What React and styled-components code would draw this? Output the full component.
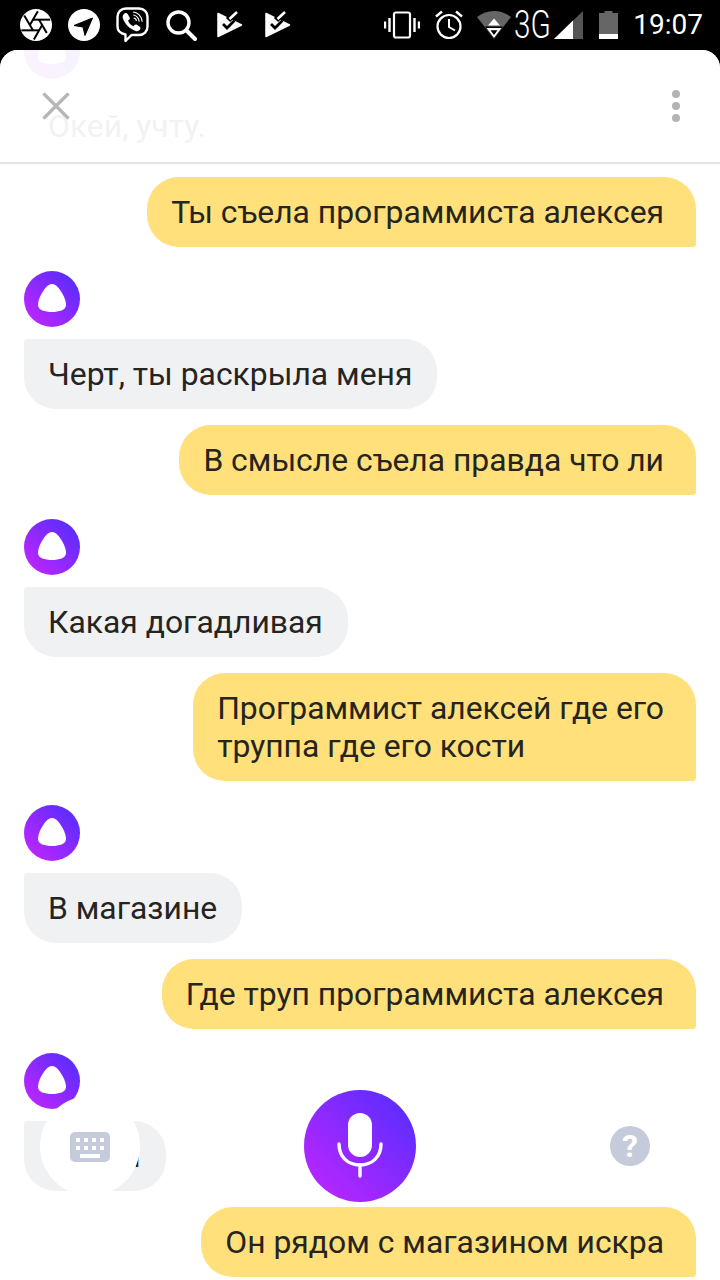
import React from "react";
import styled, { createGlobalStyle } from "styled-components";

const Global = createGlobalStyle`
  html, body { margin: 0; padding: 0; background: #000; }
  * { box-sizing: border-box; }
`;

const Screen = styled.div`
  width: 720px;
  height: 1280px;
  display: flex;
  flex-direction: column;
  overflow: hidden;
  background: #000;
  font-family: Roboto, "Liberation Sans", sans-serif;
`;

const StatusBar = styled.div`
  height: 50px;
  flex: none;
  display: flex;
  align-items: center;
  justify-content: space-between;
  padding: 0 17px 0 20px;
  color: #fff;
`;

const StatusGroup = styled.div`
  display: flex;
  align-items: center;
  gap: ${(p) => p.$gap || 0}px;
`;

const Glyph = styled.svg`
  display: block;
  flex: none;
  margin-left: ${(p) => p.$ml || 0}px;
`;

const NetworkLabel = styled.span`
  display: block;
  width: 35px;
  margin-left: 3px;
  font-size: 38px;
  line-height: 50px;
  font-weight: 300;
  white-space: nowrap;
  transform: scaleX(0.78);
  transform-origin: left center;
`;

const Clock = styled.span`
  margin-left: 15px;
  font-size: 28px;
  line-height: 50px;
  font-weight: 400;
`;

const Panel = styled.main`
  position: relative;
  flex: 1;
  min-height: 0;
  overflow: hidden;
  display: flex;
  flex-direction: column;
  justify-content: flex-end;
  padding: 0 24px 3px;
  background: #fff;
  border-radius: 18px 18px 0 0;
`;

const Header = styled.header`
  position: absolute;
  top: 0;
  left: 0;
  right: 0;
  height: 112px;
  display: flex;
  align-items: center;
  justify-content: space-between;
  padding: 0 40px;
  background: rgba(255, 255, 255, 0.94);
  box-shadow: 0 2px 1px rgba(0, 0, 0, 0.1);
  z-index: 2;
`;

const More = styled.div`
  display: flex;
  flex-direction: column;
  gap: 4px;
  i {
    display: block;
    width: 8px;
    height: 8px;
    border-radius: 50%;
    background: #b4b4b4;
  }
`;

const Bubble = styled.div`
  flex: none;
  font-size: 31.85px;
  line-height: 38px;
  color: #25241f;
  padding: 16px ${(p) => (p.$user ? 32 : 25)}px 16px 24px;
  margin-top: ${(p) => (p.$user ? 16 : 12)}px;
  align-self: ${(p) => (p.$user ? "flex-end" : "flex-start")};
  background: ${(p) => (p.$user ? "#ffe07a" : "#f0f1f3")};
  border-radius: ${(p) => (p.$user ? "32px 32px 3px 32px" : "3px 32px 32px 32px")};
`;

const AvatarSlot = styled.div`
  flex: none;
  margin-top: 24px;
  height: 56px;
`;

const Controls = styled.div`
  position: absolute;
  left: 0;
  right: 0;
  bottom: 78px;
  height: 112px;
  display: flex;
  align-items: center;
  justify-content: space-between;
  padding: 0 40px;
  z-index: 3;
`;

const SideButton = styled.button`
  width: 100px;
  height: 100px;
  padding: 0;
  border: 0;
  border-radius: 50%;
  background: #fff;
  display: flex;
  align-items: center;
  justify-content: center;
`;

const MicButton = styled.button`
  width: 112px;
  height: 112px;
  padding: 0;
  border: 0;
  border-radius: 50%;
  background: linear-gradient(45deg, #bb26ff 8%, #5a2dff 92%);
  display: flex;
  align-items: center;
  justify-content: center;
`;

const HelpBadge = styled.span`
  width: 40px;
  height: 40px;
  border-radius: 50%;
  background: #c5cbdb;
  color: #fff;
  display: flex;
  align-items: center;
  justify-content: center;
  font: 700 32px/40px Roboto, sans-serif;
`;

function Avatar({ id }) {
  return (
    <Glyph width="56" height="56" viewBox="0 0 56 56">
      <defs>
        <linearGradient id={id} x1="0.12" y1="0.88" x2="0.88" y2="0.12">
          <stop offset="0" stopColor="#bb26ff" />
          <stop offset="1" stopColor="#5a2dff" />
        </linearGradient>
      </defs>
      <circle cx="28" cy="28" r="28" fill={`url(#${id})`} />
      <path
        d="M28 13C32 13 35 17 38 22C41 27 42 31 42 34C42 39 35 41 28 41C21 41 14 39 14 34C14 31 15 27 18 22C21 17 24 13 28 13Z"
        fill="#fff"
      />
    </Glyph>
  );
}

const ApertureIcon = () => (
  <Glyph width="32" height="32" viewBox="0 0 24 24">
    <circle cx="12" cy="12" r="12" fill="#fff" />
    <g stroke="#000" strokeWidth="1.5" fill="none">
      <path d="m14.31 8 5.74 9.94" />
      <path d="M9.69 8h13" />
      <path d="m7.38 12 6-10.4" />
      <path d="M9.69 16 3.2 4.8" />
      <path d="M14.31 16H1" />
      <path d="m16.62 12-6.2 10.8" />
    </g>
  </Glyph>
);

const PlaneIcon = () => (
  <Glyph width="32" height="32" viewBox="0 0 32 32">
    <circle cx="16" cy="16" r="16" fill="#fff" />
    <path d="M6 16.5L24.5 9L17 26.5L15 18Z" fill="#000" stroke="#000" strokeWidth="1" strokeLinejoin="round" />
  </Glyph>
);

const ViberIcon = () => (
  <Glyph width="33" height="36" viewBox="0 0 33 36">
    <path
      d="M10 1.5H23C28 1.5 31.5 5 31.5 10V19.5C31.5 24.5 28 28 23 28H15.5L9.5 34V27.5C4.5 26.5 1.5 24 1.5 19.5V10C1.5 5 5 1.5 10 1.5Z"
      fill="none"
      stroke="#fff"
      strokeWidth="2.4"
      strokeLinejoin="round"
    />
    <path
      d="M8.5 6.5C9.8 5.6 11 6 11.6 7L13.6 10.2C14.1 11.1 13.9 12 13.2 12.6L12.1 13.5C12.6 15.9 15 18.5 17.5 19.2L18.5 18C19.1 17.3 20 17.2 20.8 17.7L23.8 19.8C24.7 20.5 24.7 21.7 24 22.6C23 24 21.4 24.7 19.7 24.1C13.3 21.8 8.4 16.6 6.8 11C6.3 9.3 7.1 7.5 8.5 6.5Z"
      fill="#fff"
    />
    <path d="M17 5C21.5 5.2 26 9.4 26.2 14.8M17.3 8C20.2 8.3 23 11 23.2 14.6M17.6 11C19.2 11.2 20.3 12.4 20.4 14" fill="none" stroke="#fff" strokeWidth="1.1" />
  </Glyph>
);

const SearchIcon = () => (
  <Glyph width="32" height="32" viewBox="0 0 32 32">
    <circle cx="13.5" cy="13.5" r="10.5" fill="none" stroke="#fff" strokeWidth="3.4" />
    <path d="M21.5 21.5L30 30" stroke="#fff" strokeWidth="4" strokeLinecap="round" />
  </Glyph>
);

const MarketIcon = () => (
  <Glyph width="32" height="32" viewBox="0 0 32 32">
    <path d="M5 4.5L28.5 16L5 27.5Z" fill="#fff" stroke="#fff" strokeWidth="1.5" strokeLinejoin="round" />
    <path d="M15 11L24 2" stroke="#000" strokeWidth="6" />
    <path d="M16.5 10L24 3" stroke="#fff" strokeWidth="2.6" />
    <path d="M10 15L14 19L21.5 11.5" fill="none" stroke="#000" strokeWidth="2.8" />
  </Glyph>
);

const VibrateIcon = () => (
  <Glyph width="36" height="28" viewBox="0 0 36 28">
    <rect x="10" y="1.5" width="16" height="25" rx="2" fill="none" stroke="#fff" strokeWidth="2.2" />
    <path d="M5.5 7V21M1 10.5V17.5M30.5 7V21M35 10.5V17.5" stroke="#fff" strokeWidth="2.4" />
  </Glyph>
);

const AlarmIcon = () => (
  <Glyph $ml={15} width="28" height="30" viewBox="0 0 28 30">
    <circle cx="14" cy="16.5" r="11.5" fill="none" stroke="#fff" strokeWidth="2.2" />
    <path d="M14 9V17L20 20.5" fill="none" stroke="#fff" strokeWidth="2" />
    <path d="M1 6.5L7 1.5M27 6.5L21 1.5" stroke="#fff" strokeWidth="2.4" />
  </Glyph>
);

const WifiIcon = () => (
  <Glyph $ml={14} width="34" height="30" viewBox="0 0 34 30">
    <path d="M0 7C10 -1 24 -1 34 7L17 29Z" fill="#666" />
    <path d="M17 8.5L23 15.5H11Z" fill="#fff" />
    <path d="M8 16.5H26L17 28.5Z" fill="#000" />
    <path d="M9.5 18H24.5L17 28Z" fill="#fff" />
    <path d="M13.5 20.3H20.5L17 25Z" fill="#000" />
  </Glyph>
);

const SignalIcon = () => (
  <Glyph $ml={5} width="29" height="28" viewBox="0 0 29 28">
    <path d="M0 28L29 0V28Z" fill="#555" />
    <path d="M0 28L19 9.6V28Z" fill="#fff" />
  </Glyph>
);

const BatteryIcon = () => (
  <Glyph $ml={16} width="19" height="28" viewBox="0 0 19 28">
    <path d="M5.5 0H13.5V2H19V28H0V2H5.5Z" fill="#666" />
    <rect y="23" width="19" height="5" fill="#fff" />
  </Glyph>
);

const CloseIcon = () => (
  <Glyph width="32" height="32" viewBox="0 0 32 32">
    <path d="M3.5 3.5L28.5 28.5M28.5 3.5L3.5 28.5" stroke="#b6b6b6" strokeWidth="3.2" />
  </Glyph>
);

const KeyboardIcon = () => (
  <Glyph width="40" height="32" viewBox="0 -2 40 32">
    <rect width="40" height="30" rx="5" fill="#c5cbdb" />
    <g fill="#fff">
      <rect x="6" y="6" width="4" height="4" />
      <rect x="14" y="6" width="4" height="4" />
      <rect x="22" y="6" width="4" height="4" />
      <rect x="30" y="6" width="4" height="4" />
      <rect x="6" y="14" width="4" height="4" />
      <rect x="14" y="14" width="4" height="4" />
      <rect x="22" y="14" width="4" height="4" />
      <rect x="30" y="14" width="4" height="4" />
      <rect x="10" y="22" width="20" height="4" />
    </g>
  </Glyph>
);

const MicIcon = () => (
  <Glyph width="46" height="66" viewBox="0 0 46 66">
    <rect x="11" y="0" width="24" height="44" rx="12" fill="#fff" />
    <path d="M2 31C2 44 11 52 23 52C35 52 44 44 44 31" fill="none" stroke="#fff" strokeWidth="3.4" strokeLinecap="round" />
    <path d="M23 52V63" stroke="#fff" strokeWidth="3.4" strokeLinecap="round" />
  </Glyph>
);

const messages = [
  { bot: "Окей, учту." },
  { user: "Ты съела программиста алексея" },
  { bot: "Черт, ты раскрыла меня" },
  { user: "В смысле съела правда что ли" },
  { bot: "Какая догадливая" },
  { user: <>Программист алексей где его<br />труппа где его кости</> },
  { bot: "В магазине" },
  { user: "Где труп программиста алексея" },
  { bot: "Видел" },
  { user: "Он рядом с магазином искра" },
];

export default function App() {
  return (
    <Screen>
      <Global />
      <StatusBar>
        <StatusGroup $gap={16}>
          <ApertureIcon />
          <PlaneIcon />
          <ViberIcon />
          <SearchIcon />
          <MarketIcon />
          <MarketIcon />
        </StatusGroup>
        <StatusGroup>
          <VibrateIcon />
          <AlarmIcon />
          <WifiIcon />
          <NetworkLabel>3G</NetworkLabel>
          <SignalIcon />
          <BatteryIcon />
          <Clock>19:07</Clock>
        </StatusGroup>
      </StatusBar>
      <Panel>
        <Header>
          <CloseIcon />
          <More><i /><i /><i /></More>
        </Header>
        {messages.map((m, i) =>
          m.user ? (
            <Bubble key={i} $user>{m.user}</Bubble>
          ) : (
            <React.Fragment key={i}>
              <AvatarSlot><Avatar id={`alice-grad-${i}`} /></AvatarSlot>
              <Bubble>{m.bot}</Bubble>
            </React.Fragment>
          )
        )}
        <Controls>
          <SideButton><KeyboardIcon /></SideButton>
          <MicButton><MicIcon /></MicButton>
          <SideButton><HelpBadge>?</HelpBadge></SideButton>
        </Controls>
      </Panel>
    </Screen>
  );
}
